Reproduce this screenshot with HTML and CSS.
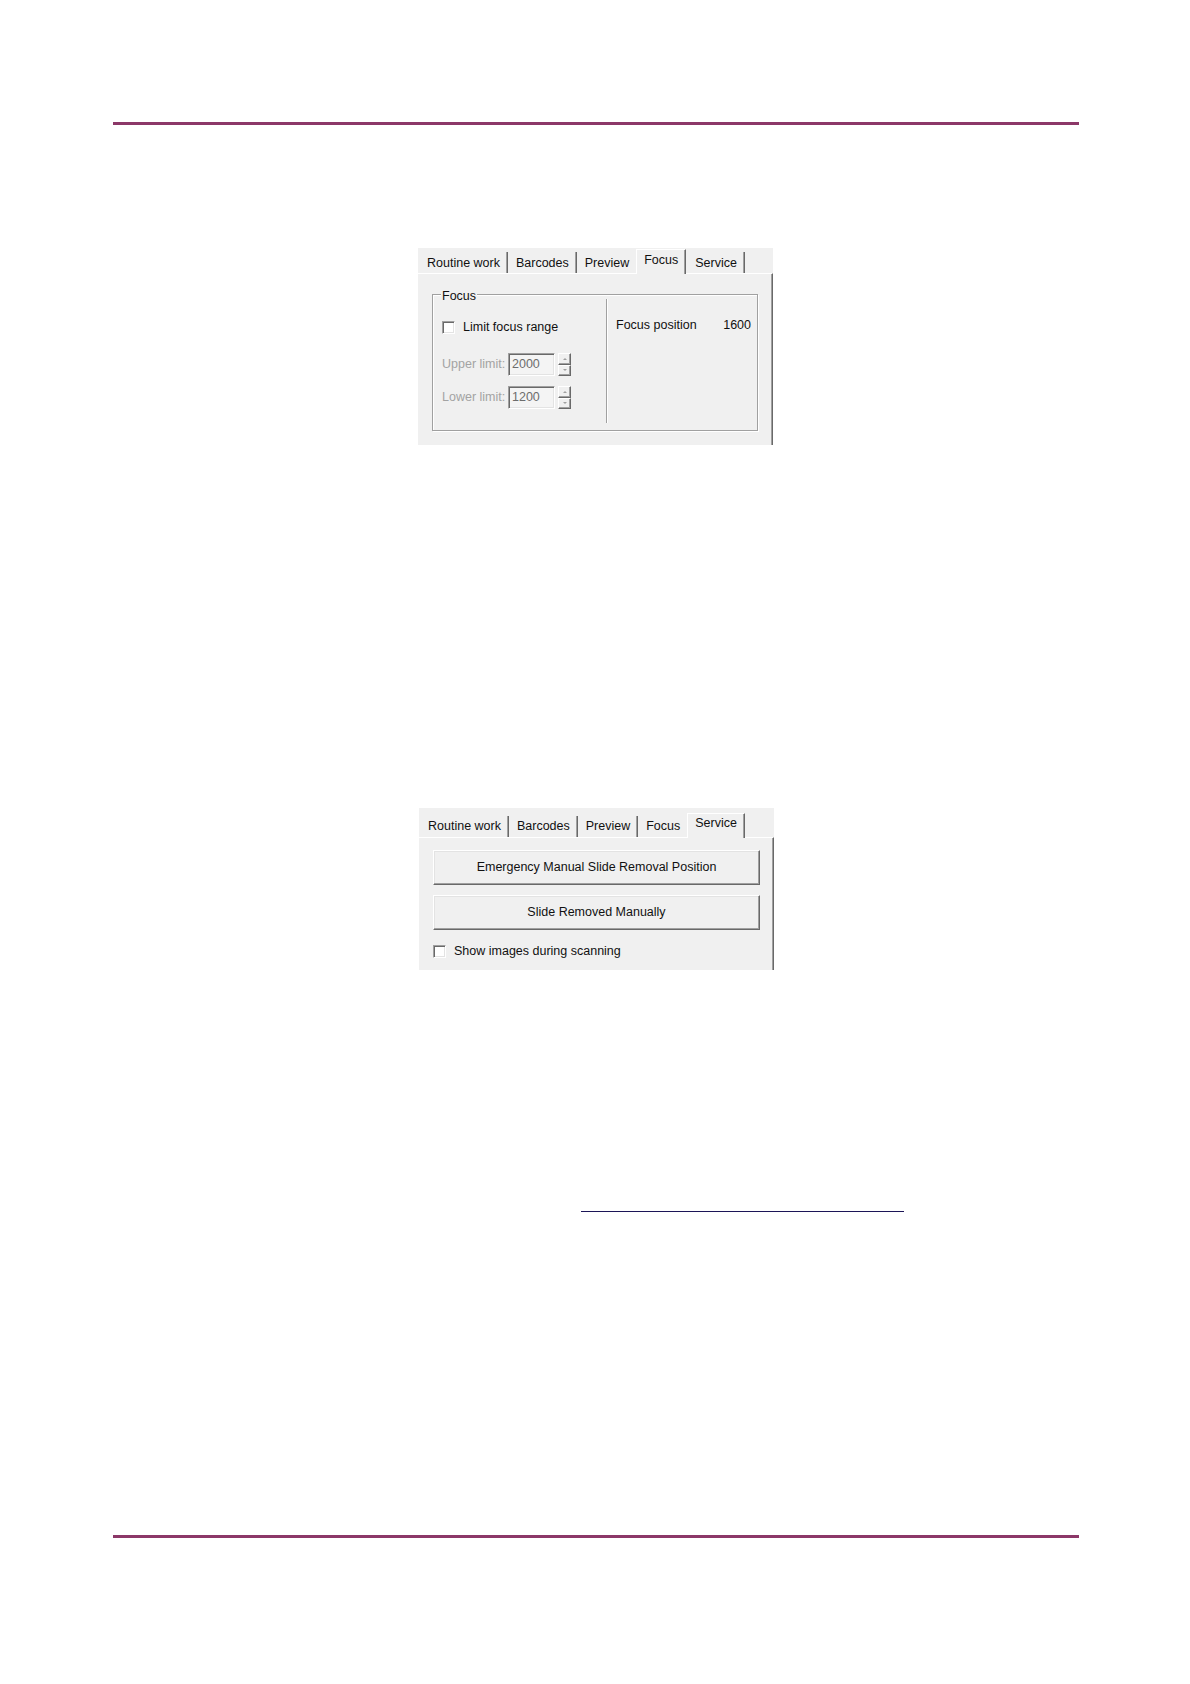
FILE: index.html
```html
<!DOCTYPE html>
<html lang="en">
<head>
<meta charset="utf-8">
<title>Focus and Service tabs</title>
<link rel="stylesheet" href="styles.css">
</head>
<body>
<div class="page">
  <div class="rule"></div>

  <div class="dialog dlg-focus">
    <div class="tabs">
      <div class="tab">Routine work</div>
      <div class="tab">Barcodes</div>
      <div class="tab before-active">Preview</div>
      <div class="tab active">Focus</div>
      <div class="tab">Service</div>
    </div>
    <div class="tab-body focus-body">
      <div class="group">
        <div class="group-title">Focus</div>
        <div class="group-cols">
          <div class="col-left">
            <div class="check-row limit-row">
              <span class="checkbox"></span>
              <span>Limit focus range</span>
            </div>
            <div class="field-row upper-row">
              <span class="field-label">Upper limit:</span>
              <span class="input">2000</span>
              <span class="spinner"><span class="spin up"></span><span class="spin down"></span></span>
            </div>
            <div class="field-row lower-row">
              <span class="field-label">Lower limit:</span>
              <span class="input">1200</span>
              <span class="spinner"><span class="spin up"></span><span class="spin down"></span></span>
            </div>
          </div>
          <div class="col-right">
            <div class="pos-row">
              <span>Focus position</span>
              <span>1600</span>
            </div>
          </div>
        </div>
      </div>
    </div>
  </div>

  <div class="dialog dlg-service">
    <div class="tabs">
      <div class="tab">Routine work</div>
      <div class="tab">Barcodes</div>
      <div class="tab">Preview</div>
      <div class="tab before-active">Focus</div>
      <div class="tab active">Service</div>
    </div>
    <div class="tab-body service-body">
      <div class="button">Emergency Manual Slide Removal Position</div>
      <div class="button">Slide Removed Manually</div>
      <div class="check-row show-row">
        <span class="checkbox"></span>
        <span>Show images during scanning</span>
      </div>
    </div>
  </div>

  <div class="link-line"></div>

  <div class="rule bottom-rule"></div>
</div>
</body>
</html>
```

FILE: styles.css
```css
html, body {
  margin: 0;
  padding: 0;
  background: #ffffff;
}

body {
  font-family: "Liberation Sans", Arial, sans-serif;
  font-size: 12.5px;
  color: #111111;
}

.page {
  width: 1190px;
  height: 1684px;
  box-sizing: border-box;
  padding-top: 122px;
  display: flex;
  flex-direction: column;
}

.rule {
  width: 966px;
  height: 3px;
  margin-left: 113px;
  background: #8c3868;
  flex: none;
}

.bottom-rule {
  margin-top: 323px;
}

.link-line {
  width: 323px;
  height: 1px;
  margin-left: 581px;
  margin-top: 241px;
  background: #1c1557;
  flex: none;
}

/* dialog */
.dialog {
  flex: none;
  width: 355px;
  background: #f0f0f0;
  display: flex;
  flex-direction: column;
}

.dlg-focus {
  margin-top: 123px;
  margin-left: 418px;
}

.dlg-service {
  margin-top: 363px;
  margin-left: 419px;
}

.tabs {
  display: flex;
  align-items: flex-end;
  height: 25px;
  padding-left: 1px;
  box-sizing: border-box;
}

.dlg-service .tabs {
  height: 29px;
}

.tab {
  height: 21px;
  box-sizing: border-box;
  padding: 4px 6px 0 8px;
  line-height: 15px;
  white-space: nowrap;
  border-right: 1px solid #a0a0a0;
  box-shadow: 1px 0 0 #696969;
  margin-right: 1px;
}

.dlg-service .tab {
  padding-top: 3px;
}

.tab.before-active {
  border-right: 1px solid transparent;
  box-shadow: none;
  margin-right: 0;
}

.tab.active {
  height: 25px;
  margin-bottom: -1px;
  padding: 3px 7px 0 7px;
  border-left: 1px solid #ffffff;
  border-top: 1px solid #ffffff;
  border-right: 1px solid #696969;
  box-shadow: inset -1px 0 0 #a0a0a0;
  background: #f0f0f0;
  position: relative;
  z-index: 1;
}

.dlg-service .tab.active {
  padding-top: 2px;
}

.tab-body {
  box-sizing: border-box;
  border-top: 1px solid #ffffff;
  border-right: 1px solid #696969;
  box-shadow: inset -1px 0 0 #a0a0a0;
}

.focus-body {
  height: 172px;
  padding: 20px 0 0 14px;
}

.service-body {
  height: 133px;
  padding: 12px 0 0 14px;
  display: flex;
  flex-direction: column;
}

/* group box */
.group {
  width: 326px;
  height: 137px;
  box-sizing: border-box;
  border: 1px solid #a0a0a0;
  box-shadow: inset 1px 1px 0 #ffffff, 1px 1px 0 #ffffff;
  display: flex;
  flex-direction: column;
}

.group-title {
  align-self: flex-start;
  margin: -6px 0 -5px 8px;
  padding: 0 1px;
  line-height: 15px;
  background: #f0f0f0;
}

.group-cols {
  display: flex;
  height: 124px;
}

.col-left {
  width: 174px;
  box-sizing: border-box;
  padding-left: 9px;
  border-right: 1px solid #a0a0a0;
  box-shadow: 1px 0 0 #ffffff;
  display: flex;
  flex-direction: column;
}

.col-right {
  flex: 1;
  padding: 0 6px 0 9px;
}

.pos-row {
  margin-top: 19px;
  line-height: 15px;
  display: flex;
  justify-content: space-between;
}

.check-row {
  display: flex;
  align-items: center;
  gap: 8px;
  line-height: 15px;
}

.limit-row {
  margin-top: 21px;
}

.show-row {
  margin-top: 14px;
}

.checkbox {
  width: 13px;
  height: 13px;
  box-sizing: border-box;
  background: #ffffff;
  border: 1px solid;
  border-color: #a0a0a0 #ffffff #ffffff #a0a0a0;
  box-shadow: inset 1px 1px 0 #696969, inset -1px -1px 0 #e3e3e3;
  flex: none;
}

.field-row {
  display: flex;
  align-items: center;
  line-height: 15px;
  color: #a3a3a3;
}

.upper-row {
  margin-top: 18px;
}

.lower-row {
  margin-top: 10px;
}

.field-label {
  width: 66px;
  flex: none;
}

.input {
  width: 47px;
  height: 23px;
  box-sizing: border-box;
  padding: 0 0 0 3px;
  display: flex;
  align-items: center;
  color: #6d6d6d;
  background: #f4f4f4;
  border: 1px solid;
  border-color: #a0a0a0 #ffffff #ffffff #a0a0a0;
  box-shadow: inset 1px 1px 0 #696969, inset -1px -1px 0 #e3e3e3;
}

.spinner {
  margin-left: 3px;
  width: 13px;
  height: 23px;
  display: flex;
  flex-direction: column;
}

.spin {
  flex: 1;
  box-sizing: border-box;
  background: #f0f0f0;
  border: 1px solid;
  border-color: #ffffff #696969 #696969 #ffffff;
  box-shadow: inset -1px -1px 0 #a0a0a0;
  display: flex;
  align-items: center;
  justify-content: center;
}

.spin::after {
  content: "";
  width: 0;
  height: 0;
  border-left: 2px solid transparent;
  border-right: 2px solid transparent;
}

.spin.up::after {
  border-bottom: 2px solid #a0a0a0;
}

.spin.down::after {
  border-top: 2px solid #a0a0a0;
}

/* buttons */
.button {
  width: 327px;
  height: 35px;
  box-sizing: border-box;
  display: flex;
  align-items: center;
  justify-content: center;
  padding-bottom: 1px;
  background: #f0f0f0;
  border: 1px solid;
  border-color: #ffffff #696969 #696969 #ffffff;
  box-shadow: inset -1px -1px 0 #a0a0a0, inset 1px 1px 0 #e3e3e3;
}

.button + .button {
  margin-top: 10px;
}
```
